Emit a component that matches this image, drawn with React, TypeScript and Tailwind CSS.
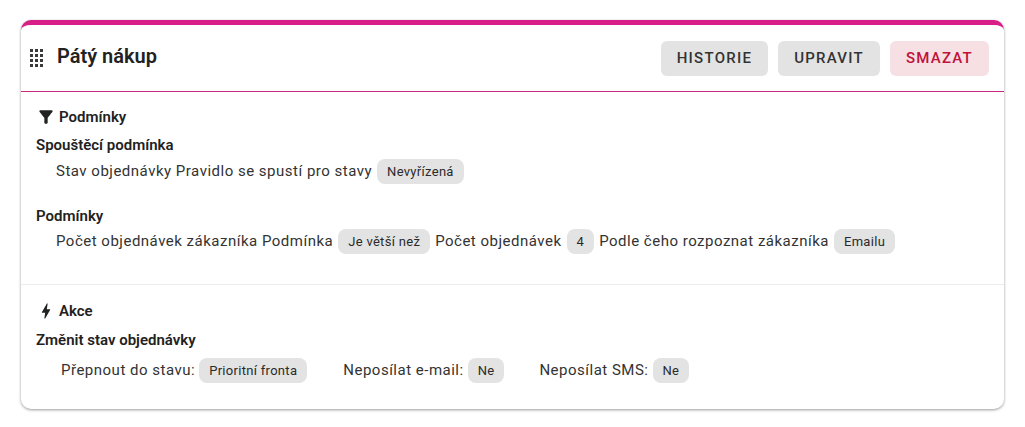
import React from "react";

function Chip({ children }: { children: React.ReactNode }) {
  return (
    <span className="inline-flex h-[25px] items-center rounded-[8px] bg-[#e3e3e3] px-[10px] text-[13px] tracking-[0.3px] text-[#2a2a2a]">
      {children}
    </span>
  );
}

function Btn({ children, danger }: { children: React.ReactNode; danger?: boolean }) {
  return (
    <button
      className={
        danger
          ? "h-[35px] rounded-[6px] bg-[#f6e0e4] px-[16px] text-[15px] font-medium tracking-[1.25px] text-[#c0123a]"
          : "h-[35px] rounded-[6px] bg-[#e3e3e3] px-[16px] text-[15px] font-medium tracking-[1.25px] text-[#333]"
      }
    >
      {children}
    </button>
  );
}

function Grip() {
  const dots = [];
  for (let r = 0; r < 4; r++)
    for (let c = 0; c < 3; c++)
      dots.push(<rect key={`${r}-${c}`} x={c * 5} y={r * 5} width="3" height="3" fill="#3a3a3a" />);
  return (
    <svg width="13" height="18" viewBox="0 0 13 18" className="shrink-0">
      {dots}
    </svg>
  );
}

export default function App() {
  return (
    <div className="bg-white px-[21px] pb-[18px] pt-[20px] font-['Roboto',sans-serif] text-[#222]">
      <div className="w-[983px] overflow-hidden rounded-[10px] border-t-[5px] border-[#d81f88] bg-white shadow-[0_1px_3px_rgba(0,0,0,0.4)]">
        <div className="flex h-[67px] items-center border-b border-[#c8287f] pl-[9px] pr-[15px]">
          <Grip />
          <h2 className="ml-[14px] -mt-[4px] text-[20px] font-semibold text-[#222]">Pátý nákup</h2>
          <div className="ml-auto flex gap-[10px]">
            <Btn>HISTORIE</Btn>
            <Btn>UPRAVIT</Btn>
            <Btn danger>SMAZAT</Btn>
          </div>
        </div>

        <div className="h-[193px] border-b border-[#ececec] px-[15px] pt-[15px]">
          <div className="flex h-[20px] items-center gap-[3px] text-[15px] font-semibold">
            <svg width="20" height="20" viewBox="0 0 24 24" fill="#222" className="shrink-0">
              <path d="M4.25 5.61C6.27 8.2 10 13 10 13v6c0 .55.45 1 1 1h2c.55 0 1-.45 1-1v-6s3.72-4.8 5.74-7.39c.51-.66.04-1.61-.79-1.61H5.04c-.83 0-1.3.95-.79 1.61z" />
            </svg>
            <span>Podmínky</span>
          </div>
          <div className="mt-[8px] text-[15px] font-semibold leading-[20px]">Spouštěcí podmínka</div>
          <div className="mt-[4px] flex items-center gap-[5px] pl-[20px] text-[15px] tracking-[0.5px] text-[#333]">
            <span>Stav objednávky Pravidlo se spustí pro stavy</span>
            <Chip>Nevyřízená</Chip>
          </div>
          <div className="mt-[22px] text-[15px] font-semibold leading-[20px]">Podmínky</div>
          <div className="mt-[3px] flex items-center gap-[5px] pl-[20px] text-[15px] tracking-[0.5px] text-[#333]">
            <span>Počet objednávek zákazníka Podmínka</span>
            <Chip>Je větší než</Chip>
            <span>Počet objednávek</span>
            <Chip>4</Chip>
            <span>Podle čeho rozpoznat zákazníka</span>
            <Chip>Emailu</Chip>
          </div>
        </div>

        <div className="h-[124px] px-[15px] pt-[16px]">
          <div className="flex h-[20px] items-center gap-[3px] text-[15px] font-semibold">
            <svg width="20" height="20" viewBox="0 0 24 24" fill="#222" className="shrink-0">
              <path d="M11 21h-1l1-7H7.5c-.58 0-.57-.32-.38-.66.19-.34.05-.08.07-.12C8.48 10.94 10.42 7.54 13 3h1l-1 7h3.5c.49 0 .56.33.47.51l-.07.15C12.96 17.55 11 21 11 21z" />
            </svg>
            <span>Akce</span>
          </div>
          <div className="mt-[9px] text-[15px] font-semibold leading-[20px]">Změnit stav objednávky</div>
          <div className="mt-[8px] flex items-center pl-[25px] text-[15px] tracking-[0.5px] text-[#333]">
            <span>Přepnout do stavu:</span>
            <span className="ml-[4px]"><Chip>Prioritní fronta</Chip></span>
            <span className="ml-[36px]">Neposílat e-mail:</span>
            <span className="ml-[4px]"><Chip>Ne</Chip></span>
            <span className="ml-[35px]">Neposílat SMS:</span>
            <span className="ml-[4px]"><Chip>Ne</Chip></span>
          </div>
        </div>
      </div>
    </div>
  );
}
